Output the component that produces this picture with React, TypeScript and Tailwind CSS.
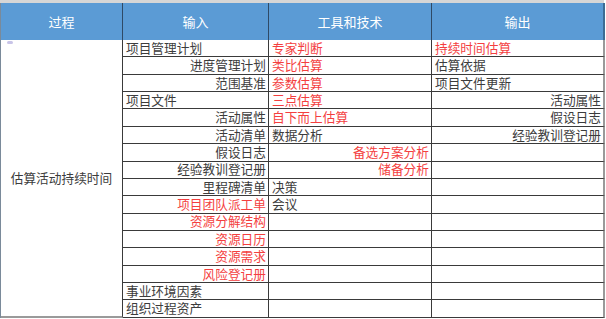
type Cell = { t: string; red?: boolean; right?: boolean };

const inputs: Cell[] = [
  { t: "项目管理计划" },
  { t: "进度管理计划", right: true },
  { t: "范围基准", right: true },
  { t: "项目文件" },
  { t: "活动属性", right: true },
  { t: "活动清单", right: true },
  { t: "假设日志", right: true },
  { t: "经验教训登记册", right: true },
  { t: "里程碑清单", right: true },
  { t: "项目团队派工单", right: true, red: true },
  { t: "资源分解结构", right: true, red: true },
  { t: "资源日历", right: true, red: true },
  { t: "资源需求", right: true, red: true },
  { t: "风险登记册", right: true, red: true },
  { t: "事业环境因素" },
  { t: "组织过程资产" },
];

const tools: Cell[] = [
  { t: "专家判断", red: true },
  { t: "类比估算", red: true },
  { t: "参数估算", red: true },
  { t: "三点估算", red: true },
  { t: "自下而上估算", red: true },
  { t: "数据分析" },
  { t: "备选方案分析", right: true, red: true },
  { t: "储备分析", right: true, red: true },
  { t: "决策" },
  { t: "会议" },
];

const outputs: Cell[] = [
  { t: "持续时间估算", red: true },
  { t: "估算依据" },
  { t: "项目文件更新" },
  { t: "活动属性", right: true },
  { t: "假设日志", right: true },
  { t: "经验教训登记册", right: true },
];

function BodyCell({ c, last }: { c?: Cell; last?: boolean }) {
  return (
    <div
      className={
        "flex items-center border-b border-[#3a3a3a] px-[3px] leading-none whitespace-nowrap " +
        (last ? "border-r-2 border-r-[#9a9a9a] " : "border-r border-r-[#3a3a3a] ") +
        (c?.right ? "justify-end pr-[2px] " : "justify-start ") +
        (c?.red ? "text-[#f43f3f]" : "text-[#3c3c3c]")
      }
    >
      {c?.t ?? ""}
    </div>
  );
}

export default function App() {
  const rows = Array.from({ length: 16 }, (_, i) => i);
  return (
    <div
      className="w-[606px] h-[319px] bg-white text-[12.7px]"
      style={{ fontFamily: '"Noto Sans CJK SC", "Noto Sans", sans-serif' }}
    >
      <div className="h-[3px] bg-[#d6d6d6] w-[604px]" />
      <div className="w-[604px] grid grid-cols-[122px_146px_163px_173px] grid-rows-[37px_repeat(16,17.36px)] border-l border-l-[#7a8a9a]">
        {["过程", "输入", "工具和技术", "输出"].map((h, i) => (
          <div
            key={h}
            className={
              "flex items-center justify-center bg-[#5b9bd5] text-white text-[13px] " +
              (i < 3 ? "border-r border-r-[#2f4a66]" : "border-r-2 border-r-[#3d6c94]")
            }
          >
            {h}
          </div>
        ))}
        <div className="row-span-16 flex items-center justify-center border-r border-r-[#3a3a3a] border-b-2 border-b-[#9a9a9a] text-[#3c3c3c] relative">
          <span className="absolute left-[6px] top-[1px] w-[6px] h-[3px] bg-[#c8c4e8] rounded-sm" />
          估算活动持续时间
        </div>
        {rows.map((i) => (
          <div key={i} className="contents">
            <BodyCell c={inputs[i]} />
            <BodyCell c={tools[i]} />
            <BodyCell c={outputs[i]} last />
          </div>
        ))}
      </div>
    </div>
  );
}
